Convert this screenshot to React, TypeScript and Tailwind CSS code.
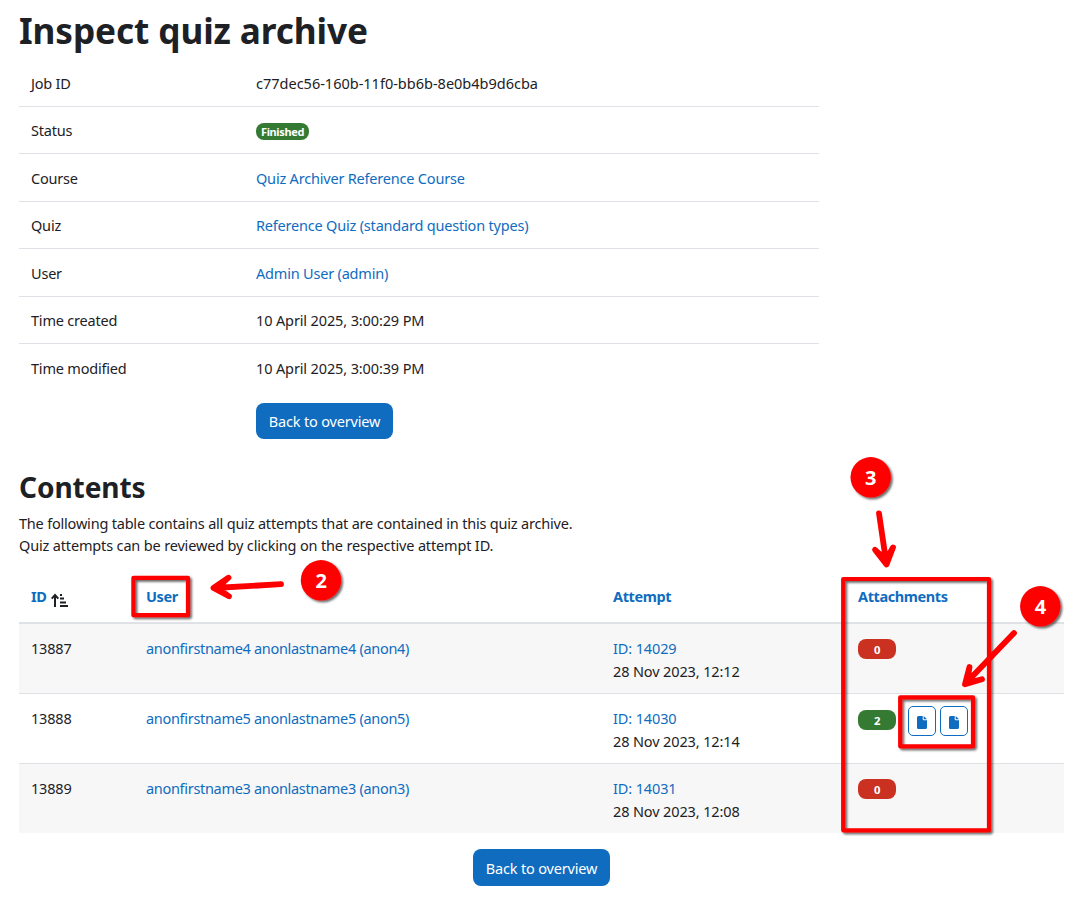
import type { ReactNode } from "react";

const Link = ({ children }: { children: ReactNode }) => (
  <a href="#" className="text-[#0f6cbf]">{children}</a>
);

const details: { label: string; value: ReactNode; spacing?: string }[] = [
  { label: "Job ID", value: "c77dec56-160b-11f0-bb6b-8e0b4b9d6cba", spacing: "tracking-normal" },
  {
    label: "Status",
    value: (
      <span className="mt-[4px] block h-[17px] w-[53px] rounded-lg bg-[#357a32] text-center text-[11px] leading-[17px] font-bold tracking-[-0.38px] text-white">
        Finished
      </span>
    ),
  },
  { label: "Course", value: <Link>Quiz Archiver Reference Course</Link> },
  { label: "Quiz", value: <Link>Reference Quiz (standard question types)</Link> },
  { label: "User", value: <Link>Admin User (admin)</Link> },
  { label: "Time created", value: "10 April 2025, 3:00:29 PM", spacing: "tracking-[-0.13px]" },
  { label: "Time modified", value: "10 April 2025, 3:00:39 PM", spacing: "tracking-[-0.13px]" },
];

const attempts = [
  { id: "13887", user: "anonfirstname4 anonlastname4 (anon4)", attempt: "14029", date: "28 Nov 2023, 12:12", files: 0 },
  { id: "13888", user: "anonfirstname5 anonlastname5 (anon5)", attempt: "14030", date: "28 Nov 2023, 12:14", files: 2 },
  { id: "13889", user: "anonfirstname3 anonlastname3 (anon3)", attempt: "14031", date: "28 Nov 2023, 12:08", files: 0 },
];

const SortIcon = () => (
  <svg viewBox="0 0 18 16" className="mt-[7px] ml-[5px] h-4 w-[18px] text-[#1d2125]" fill="none" stroke="currentColor" strokeWidth="2">
    <path d="M4 15V3.5M0.7 6.7L4 3L7.3 6.7" />
    <path d="M9 3h2M9 6.6h4M9 10.4h6M9 14h8" />
  </svg>
);

const FileIcon = () => (
  <svg viewBox="0 0 10 13" className="h-[13px] w-[10px]" fill="currentColor">
    <path d="M1.5 0H5.7V3.2Q5.7 4.3 6.8 4.3H10V11.5Q10 13 8.5 13H1.5Q0 13 0 11.5V1.5Q0 0 1.5 0Z" />
    <path d="M6.7 0L10 3.3H6.7Z" />
  </svg>
);

const BackButton = ({ className }: { className: string }) => (
  <button className={`w-[137px] rounded-lg bg-[#0f6cbf] pt-px text-[14.5px] tracking-[-0.16px] text-white ${className}`}>Back to overview</button>
);

const Attachments = ({ count }: { count: number }) => (
  <div className="flex items-start">
    {count > 0 ? (
      <span className="mt-1 h-5 w-[38px] rounded-lg bg-[#357a32] text-center text-[11.25px] leading-[21px] font-bold text-white">{count}</span>
    ) : (
      <span className="mt-[3px] h-5 w-[38px] rounded-lg bg-[#ca3120] text-center text-[11.25px] leading-[21px] font-bold text-white">{count}</span>
    )}
    {count > 0 && (
      <div className="ml-3 flex gap-1">
        {Array.from({ length: count }, (_, i) => (
          <button key={i} className="flex h-[30px] w-7 items-center justify-center rounded-[5px] border border-[#0f6cbf] pt-[3px] text-[#0f6cbf]">
            <FileIcon />
          </button>
        ))}
      </div>
    )}
  </div>
);

const Annotations = () => (
  <svg className="pointer-events-none absolute top-0 left-0 h-[908px] w-[1081px]" viewBox="0 0 1081 908">
    <defs>
      <filter id="shadow" x="0" y="0" width="1081" height="908" filterUnits="userSpaceOnUse">
        <feDropShadow dx="1.8" dy="1.8" stdDeviation="1" floodColor="#000" floodOpacity="0.6" />
      </filter>
    </defs>
    <g filter="url(#shadow)" fill="none" stroke="#f00" strokeWidth="4.2" strokeLinejoin="round">
      <rect x="133.4" y="577.8" width="54.6" height="37.4" />
      <rect x="843.2" y="579" width="145.8" height="251.3" />
      <rect x="900.2" y="697.3" width="72.8" height="49" />
    </g>
    <g filter="url(#shadow)" fill="#f00">
      <circle cx="321" cy="580.3" r="20.2" />
      <circle cx="870.7" cy="477.3" r="20.2" />
      <circle cx="1040.3" cy="606.3" r="20.2" />
    </g>
    <g fill="none" stroke="#f00" strokeWidth="5.8" strokeLinecap="round" strokeLinejoin="round">
      <path d="M281 584.2L214 588M228.5 577.7L213.5 588L229 596.3L217 588Z" />
      <path d="M879 513.3L886.3 563M875 549.8L886.5 564.5L893 547.5L886 560Z" />
      <path d="M1014 633L966 683M969.5 667L965 684.3L982 679.3L967 683Z" />
    </g>
    <g fill="#fff" textAnchor="middle" className="font-['Open_Sans'] text-[20px] font-bold">
      <text x="321" y="587.7">2</text>
      <text x="870.5" y="485.3">3</text>
      <text x="1040.3" y="614.3">4</text>
    </g>
  </svg>
);

export default function App() {
  return (
    <main className="relative h-[908px] w-[1081px] overflow-hidden bg-white pr-[17px] pl-[19px] font-['Noto_Sans',sans-serif] text-[14.5px] leading-[22.5px] tracking-[-0.2px] text-[#1d2125]">
      <h1 className="h-[59px] pt-[8px] text-[35.2px] leading-[45px] font-bold tracking-[-0.1px]">Inspect quiz archive</h1>
      <dl className="w-[800px]">
        {details.map((row) => (
          <div key={row.label} className="flex h-[47.5px] border-b border-[#dee2e6] px-3 pt-[12.5px] last:border-0">
            <dt className="w-[225px]">{row.label}</dt>
            <dd className={row.spacing}>{row.value}</dd>
          </div>
        ))}
      </dl>
      <div className="mt-[11.5px] flex pl-[237px]"><BackButton className="h-9" /></div>
      <h2 className="mt-[30px] h-[43px] text-[28.1px] leading-9 font-bold tracking-[-0.1px]">Contents</h2>
      <p className="h-[61px] leading-[22px]">
        The following table contains all quiz attempts that are contained in this quiz archive.<br />
        <span className="tracking-[-0.16px]">Quiz attempts can be reviewed by clicking on the respective attempt ID.</span>
      </p>
      <section className="w-[1045px]">
        <div className="grid h-[51px] grid-cols-[115px_467px_245px_1fr] border-b-2 border-[#dee2e6] pt-[12px] pl-3 font-bold tracking-[-0.4px]">
          <div className="flex"><Link>ID</Link><SortIcon /></div>
          <div><Link>User</Link></div>
          <div><Link>Attempt</Link></div>
          <div><Link>Attachments</Link></div>
        </div>
        {attempts.map((row) => (
          <div key={row.id} className="grid h-[70px] grid-cols-[115px_467px_245px_1fr] border-b border-[#dee2e6] pt-3 pl-3 leading-[23px] last:h-[69px] last:border-0 odd:bg-white even:bg-[#f7f7f7]">
            <div className="pt-px">{row.id}</div>
            <div className="pt-px tracking-[-0.31px]"><Link>{row.user}</Link></div>
            <div className="pt-px tracking-[-0.13px]"><Link>ID: {row.attempt}</Link><br />{row.date}</div>
            <Attachments count={row.files} />
          </div>
        ))}
      </section>
      <div className="mt-4 flex justify-center"><BackButton className="h-[37px]" /></div>
      <Annotations />
    </main>
  );
}
